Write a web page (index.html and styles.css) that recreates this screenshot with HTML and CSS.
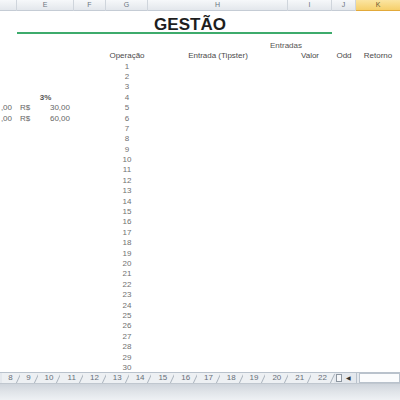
FILE: index.html
```html
<!DOCTYPE html>
<html lang="pt">
<head>
  <meta charset="UTF-8" />
  <title>Gestão</title>
  <link rel="stylesheet" href="styles.css">
</head>
<body>
  <div class="colheads">
    <div class="ch"></div>
    <div class="ch">E</div>
    <div class="ch">F</div>
    <div class="ch">G</div>
    <div class="ch">H</div>
    <div class="ch">I</div>
    <div class="ch">J</div>
    <div class="ch active">K</div>
  </div>

  <div class="sheet">
    <div class="row title-row">
      <div class="title">GESTÃO</div>
    </div>
    <div class="spacer"></div>

    <div class="row"><div class="entradas">Entradas</div></div>
    <div class="row head">
      <div class="c-g">Operação</div>
      <div class="c-h">Entrada (Tipster)</div>
      <div class="c-i">Valor</div>
      <div class="c-j">Odd</div>
      <div class="c-k">Retorno</div>
    </div>

    <div class="row"><div class="c-g num">1</div></div>
    <div class="row"><div class="c-g num">2</div></div>
    <div class="row"><div class="c-g num">3</div></div>
    <div class="row">
      <div class="c-e pct">3%</div>
      <div class="c-g num">4</div>
    </div>
    <div class="row">
      <div class="c-d money">,00</div>
      <div class="c-e cur"><span>R$</span><span>30,00</span></div>
      <div class="c-g num">5</div>
    </div>
    <div class="row">
      <div class="c-d money">,00</div>
      <div class="c-e cur"><span>R$</span><span>60,00</span></div>
      <div class="c-g num">6</div>
    </div>
    <div class="row"><div class="c-g num">7</div></div>
    <div class="row"><div class="c-g num">8</div></div>
    <div class="row"><div class="c-g num">9</div></div>
    <div class="row"><div class="c-g num">10</div></div>
    <div class="row"><div class="c-g num">11</div></div>
    <div class="row"><div class="c-g num">12</div></div>
    <div class="row"><div class="c-g num">13</div></div>
    <div class="row"><div class="c-g num">14</div></div>
    <div class="row"><div class="c-g num">15</div></div>
    <div class="row"><div class="c-g num">16</div></div>
    <div class="row"><div class="c-g num">17</div></div>
    <div class="row"><div class="c-g num">18</div></div>
    <div class="row"><div class="c-g num">19</div></div>
    <div class="row"><div class="c-g num">20</div></div>
    <div class="row"><div class="c-g num">21</div></div>
    <div class="row"><div class="c-g num">22</div></div>
    <div class="row"><div class="c-g num">23</div></div>
    <div class="row"><div class="c-g num">24</div></div>
    <div class="row"><div class="c-g num">25</div></div>
    <div class="row"><div class="c-g num">26</div></div>
    <div class="row"><div class="c-g num">27</div></div>
    <div class="row"><div class="c-g num">28</div></div>
    <div class="row"><div class="c-g num">29</div></div>
    <div class="row"><div class="c-g num">30</div></div>
  </div>

  <div class="tabbar">
    <div class="tabs">
      <div class="tab one">8</div>
      <div class="tab one">9</div>
      <div class="tab">10</div>
      <div class="tab">11</div>
      <div class="tab">12</div>
      <div class="tab">13</div>
      <div class="tab">14</div>
      <div class="tab">15</div>
      <div class="tab">16</div>
      <div class="tab">17</div>
      <div class="tab">18</div>
      <div class="tab">19</div>
      <div class="tab">20</div>
      <div class="tab">21</div>
      <div class="tab">22</div>
    </div>
    <div class="newtab"></div>
    <div class="scroll-left">&#9664;</div>
    <div class="hscroll"></div>
  </div>
  <div class="status"></div>
</body>
</html>
```

FILE: styles.css
```css
* { box-sizing: border-box; margin: 0; padding: 0; }
body {
  width: 400px;
  height: 400px;
  overflow: hidden;
  background: white;
  font-family: "Liberation Sans", Arial, sans-serif;
  font-size: 8px;
  color: #555;
}

/* column letters */
.colheads {
  display: grid;
  grid-template-columns: 17px 57px 32px 42px 140px 44px 24px 44px;
  height: 11px;
  background: linear-gradient(#f6f8fa, #e3e7ec);
  border-bottom: 1px solid #c5ccd5;
}
.ch {
  border-right: 1px solid #cfd5dc;
  text-align: center;
  font-size: 7px;
  line-height: 10px;
  color: #6b7480;
}
.ch.active {
  background: linear-gradient(#fbe5a2, #f6cf6a);
  border-right: none;
  border-bottom: 1px solid #e2a93a;
  color: #6b5a30;
}

/* sheet body */
.sheet {
  height: 361px;
  overflow: hidden;
}
.row {
  display: grid;
  grid-template-columns: 17px 57px 32px 42px 140px 44px 24px 44px;
  height: 10.4px;
  line-height: 10.4px;
  white-space: nowrap;
}
.title-row { height: 23px; line-height: normal; }
.title {
  grid-column: 2 / 7;
  text-align: center;
  padding: 6px 0 0 31px;
  font-size: 17px;
  font-weight: bold;
  line-height: 15px;
  color: #1e1e1e;
  border-bottom: 2px solid #3dab6c;
}
.spacer { height: 6.8px; }

.entradas {
  grid-column: 5 / 7;
  text-align: right;
  padding-right: 30px;
  color: #555;
}

.c-d { grid-column: 1; }
.c-e { grid-column: 2; }
.c-g { grid-column: 4; text-align: center; }
.c-h { grid-column: 5; text-align: center; }
.c-i { grid-column: 6; text-align: center; }
.c-j { grid-column: 7; text-align: center; }
.c-k { grid-column: 8; text-align: center; }

.head div { color: #4a4a4a; }
.num { color: #707070; }

.pct {
  text-align: center;
  font-weight: bold;
  color: #555;
}
.money {
  text-align: right;
  padding-right: 5px;
  color: #666;
}
.cur {
  display: flex;
  justify-content: space-between;
  padding: 0 4px 0 3px;
  color: #666;
}

/* sheet tabs */
.tabbar {
  display: flex;
  height: 11px;
  background: #e4e8ed;
  border-top: 1px solid #b9c2cc;
}
.tabs {
  display: flex;
  padding-left: 1.5px;
}
.tab {
  position: relative;
  width: 22.8px;
  text-align: center;
  line-height: 10px;
  color: #666e78;
  background: #edf0f3;
}
.tab.one { width: 18px; }
.tab::after {
  content: "";
  position: absolute;
  right: 1px;
  top: 1px;
  width: 1px;
  height: 9px;
  background: #a9b2bc;
  transform: skewX(-25deg);
}
.newtab {
  width: 6px;
  height: 8px;
  margin: 1px 0 0 2px;
  border: 1px solid #8d96a0;
  background: #f6f7f9;
}
.scroll-left {
  width: 15px;
  text-align: center;
  font-size: 6px;
  line-height: 10px;
  color: #333;
  border-right: 1px solid #b9c2cc;
}
.hscroll {
  flex: 1;
  margin: 0 0 0 2px;
  background: #fbfcfd;
  border: 1px solid #b9c2cc;
}

.status {
  height: 17px;
  background: linear-gradient(#cfd5dc, #dfe3e8 45%, #eef1f4);
  border-top: 1px solid #c0c7cf;
}
```
